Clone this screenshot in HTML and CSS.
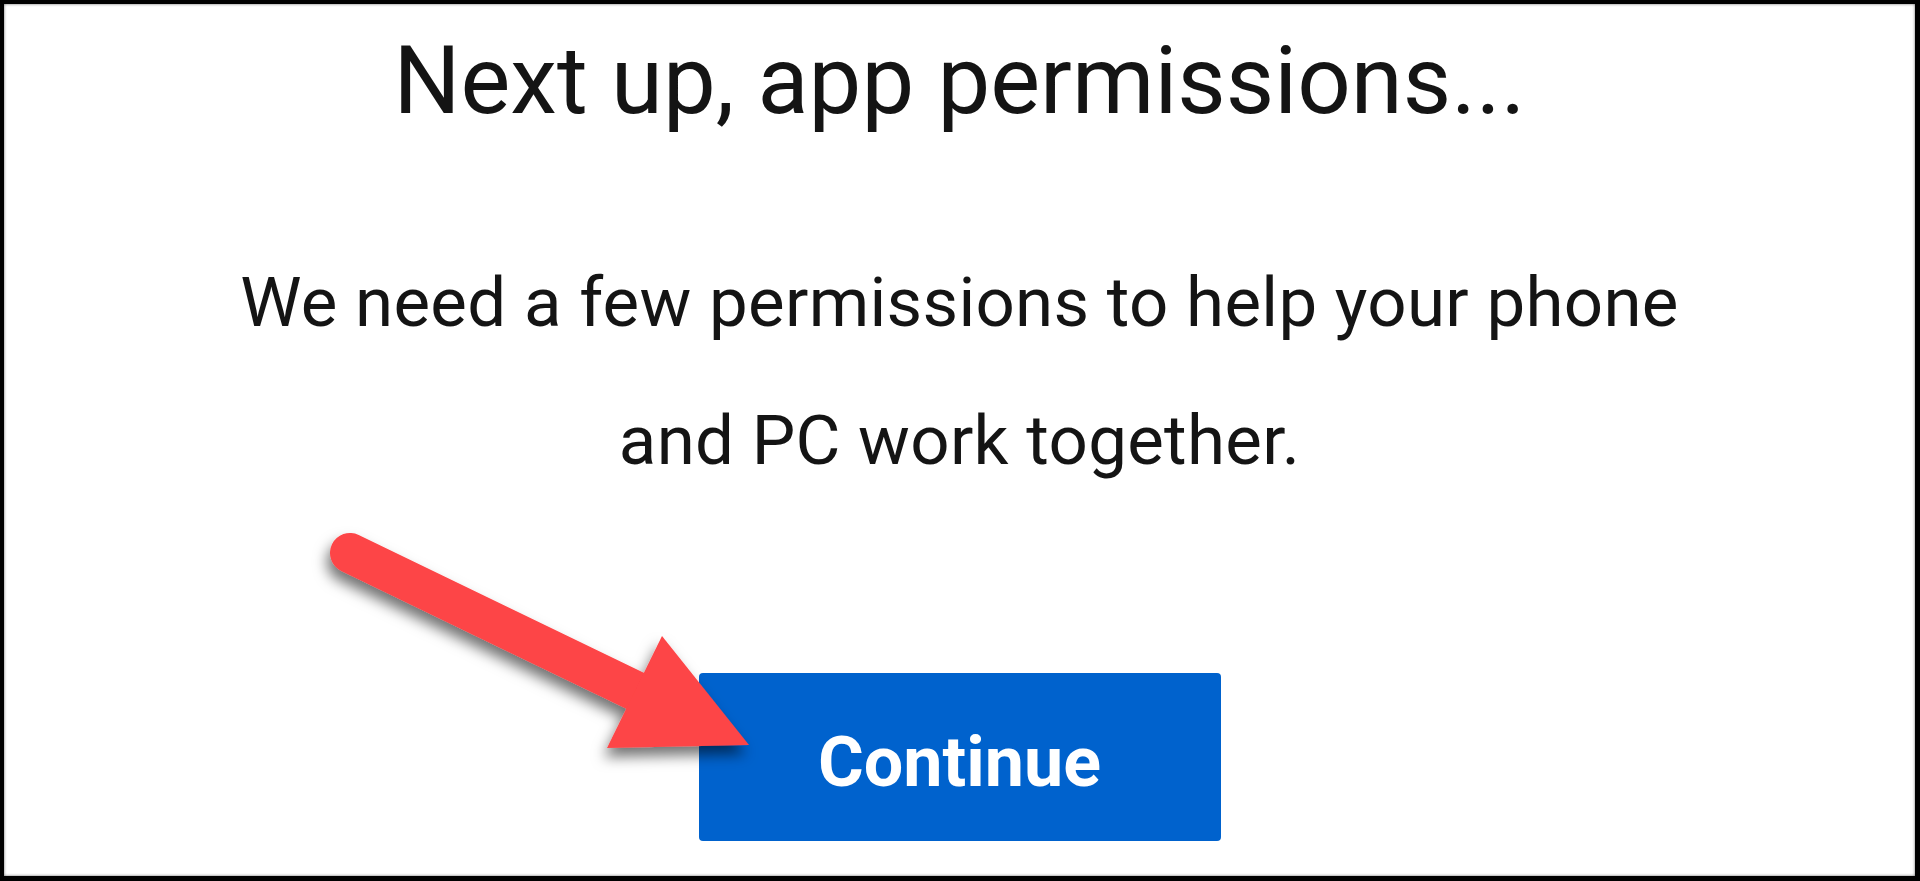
FILE: index.html
```html
<!DOCTYPE html>
<html lang="en">
<head>
<meta charset="utf-8">
<title>Next up, app permissions</title>
<link rel="stylesheet" href="styles.css">
</head>
<body>
<div class="frame">
  <h1 class="title">Next up, app permissions...</h1>
  <p class="body-text">We need a few permissions to help your phone<br>and PC work together.</p>
  <button class="continue">Continue</button>
  <svg class="arrow" width="1920" height="881" viewBox="0 0 1920 881" aria-hidden="true">
    <defs>
      <filter id="shadow" x="-20%" y="-20%" width="140%" height="150%">
        <feDropShadow dx="-3" dy="9" stdDeviation="7" flood-color="#000" flood-opacity="0.55"/>
      </filter>
    </defs>
    <g filter="url(#shadow)" fill="#fd4446" stroke="none">
      <path d="M350 553 L650 698" stroke="#fd4446" stroke-width="40" stroke-linecap="round" fill="none"/>
      <polygon points="662,636 607,748 749,745"/>
    </g>
  </svg>
</div>
</body>
</html>
```

FILE: styles.css
```css
html, body {
  margin: 0;
  padding: 0;
  background: #ffffff;
}

.frame {
  position: relative;
  box-sizing: border-box;
  width: 1920px;
  height: 881px;
  border-style: solid;
  border-color: #000;
  border-width: 4px 5px 5px 4px;
  box-shadow: inset 0 0 3px rgba(0, 0, 0, 0.6);
  background: #fff;
  display: flex;
  flex-direction: column;
  align-items: center;
  padding-top: 22px;
  font-family: Roboto, "Liberation Sans", sans-serif;
  color: #141414;
  overflow: hidden;
}

.title {
  margin: 0;
  font-size: 94px;
  font-weight: 400;
  line-height: 110px;
  text-align: center;
}

.body-text {
  margin: 98px 0 0 0;
  font-size: 69px;
  line-height: 138px;
  text-align: center;
  letter-spacing: 0.3px;
}

.continue {
  margin-top: 163px;
  box-sizing: border-box;
  width: 522px;
  height: 168px;
  padding: 10px 0 0 0;
  border: none;
  border-radius: 4px;
  background: #0062cd;
  color: #ffffff;
  font-family: Roboto, "Liberation Sans", sans-serif;
  font-weight: 700;
  font-size: 70px;
  display: flex;
  align-items: center;
  justify-content: center;
}

.arrow {
  position: absolute;
  left: -4px;
  top: -4px;
  pointer-events: none;
}
```
